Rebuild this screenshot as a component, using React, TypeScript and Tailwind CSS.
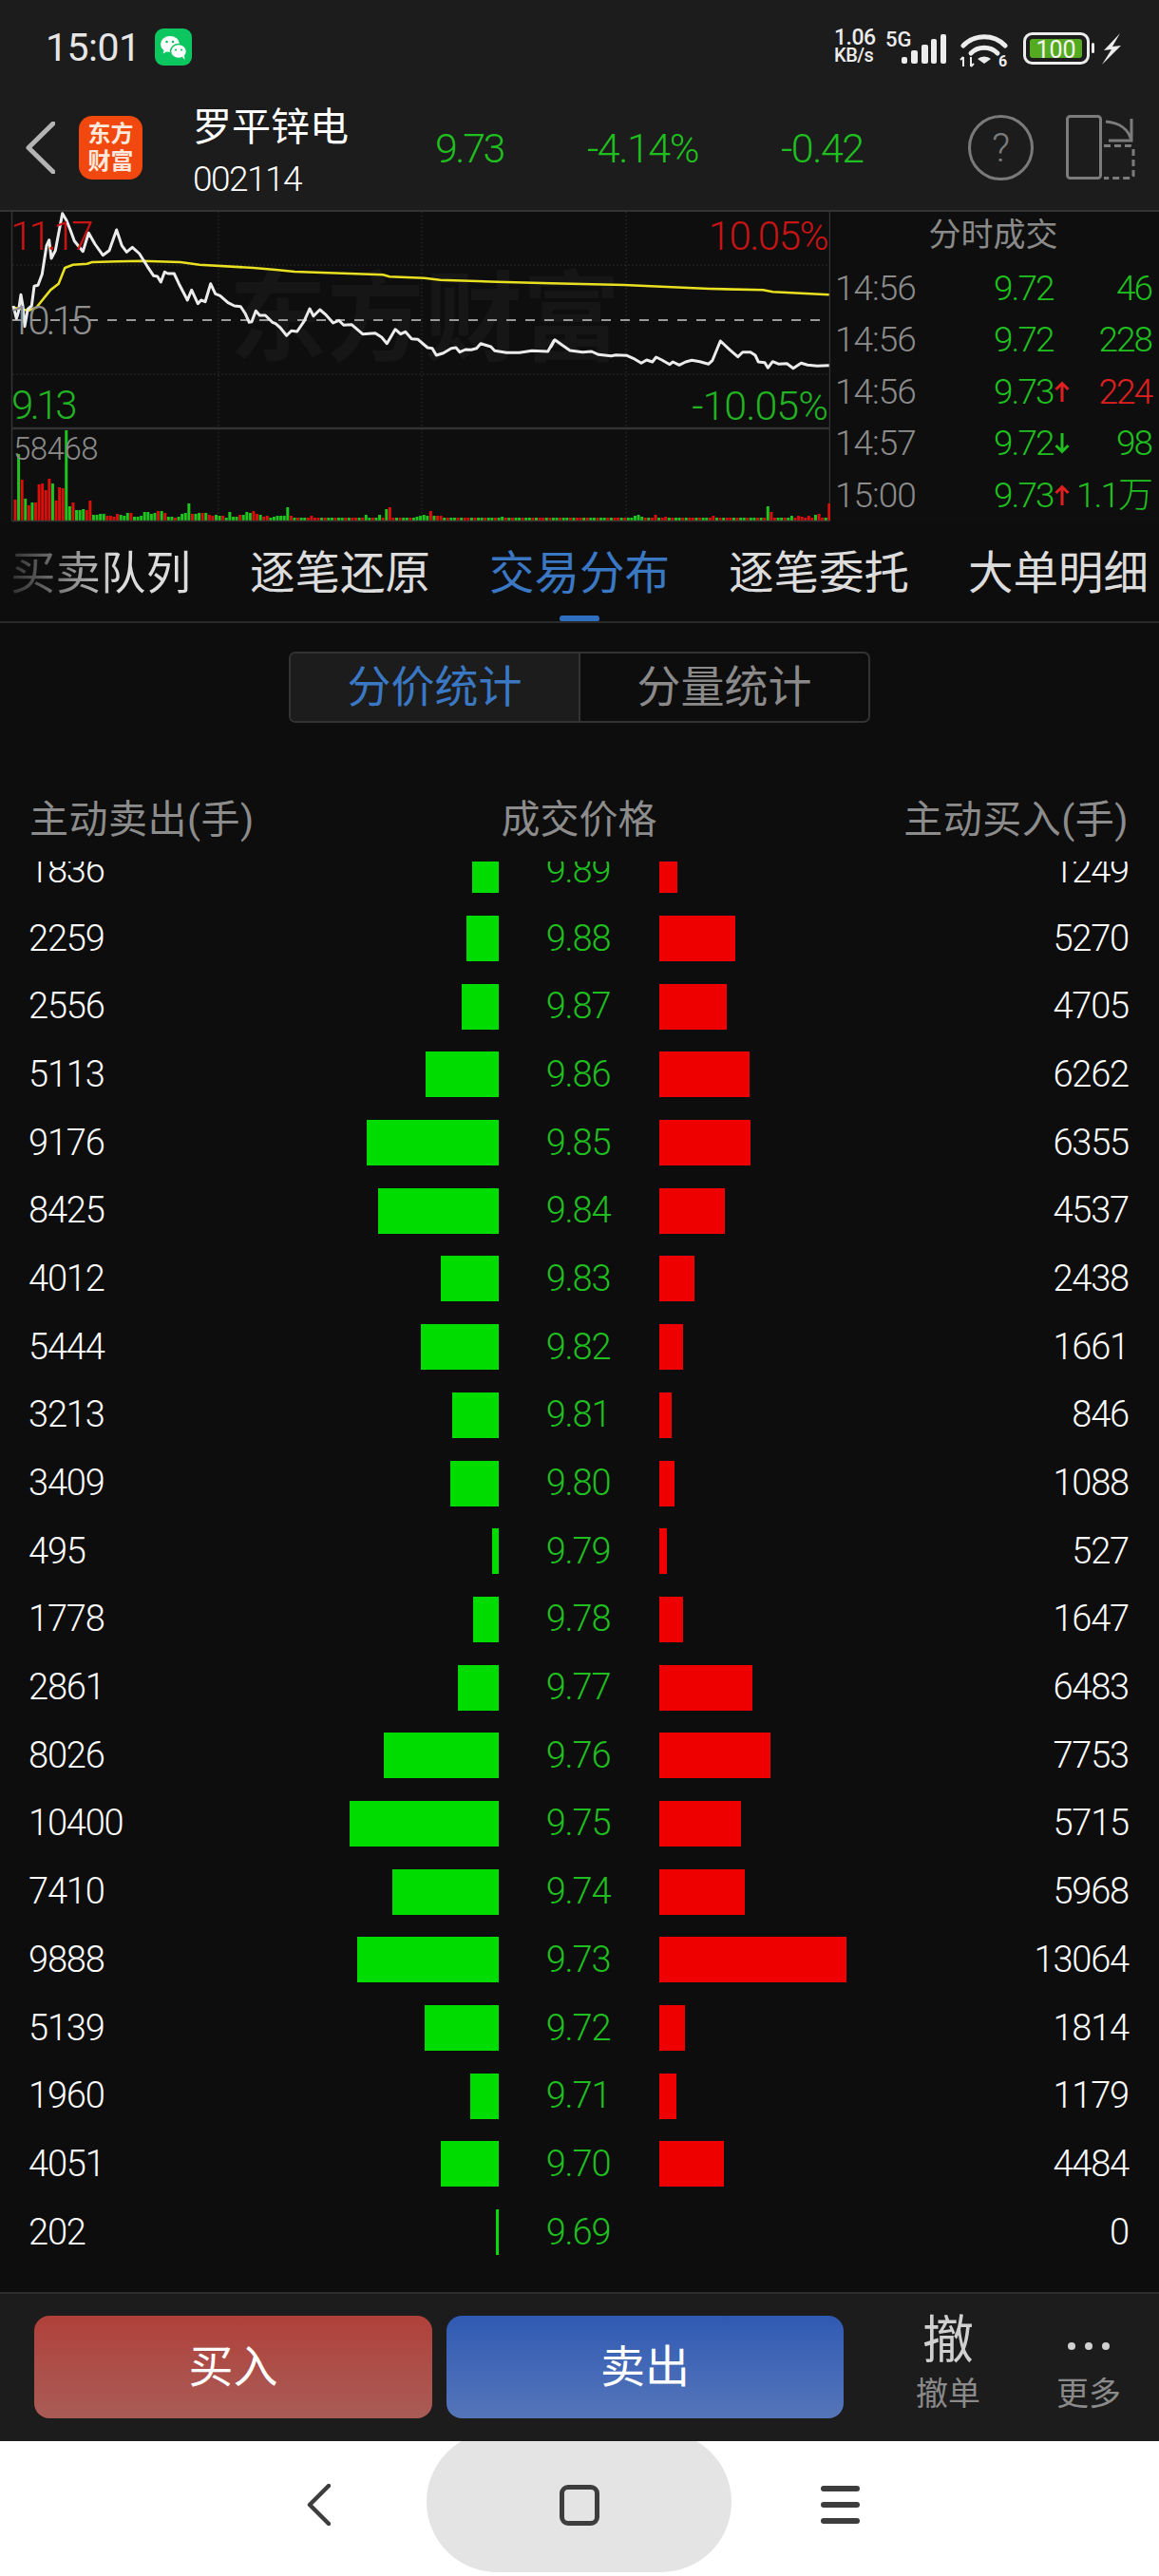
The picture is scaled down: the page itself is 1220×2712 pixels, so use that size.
import { ReactNode } from 'react'

// ─── Chart data (page coordinates) ──────────────────────────────────
const fromZoom = (pts: number[][], ox: number, oy: number) => pts.map(([x, y]) => [ox + x / 3, oy + y / 3])

const priceLine = [
  ...fromZoom(
    [[42, 300], [52, 340], [58, 320], [66, 265], [72, 300], [78, 365], [88, 310], [100, 300], [108, 238], [120, 235], [133, 200], [147, 110], [155, 92], [162, 150], [175, 125], [197, 8], [210, 30], [222, 60], [235, 95], [262, 128], [280, 70], [300, 105], [325, 140], [345, 125], [368, 60], [385, 110], [400, 130], [418, 115], [440, 135], [465, 175], [485, 205], [497, 207], [508, 225], [520, 193], [530, 198], [550, 198], [565, 230], [592, 282], [605, 250], [625, 293], [635, 282], [648, 287], [665, 230], [680, 262], [695, 268], [720, 290], [740, 300], [760, 302], [775, 325], [787, 352], [795, 350], [808, 316], [820, 330], [838, 330], [860, 352]],
    0, 222,
  ),
  ...fromZoom(
    [[0, 182], [15, 195], [35, 220], [50, 205], [68, 207], [90, 175], [108, 135], [120, 158], [140, 138], [160, 155], [182, 180], [200, 172], [215, 187], [240, 185], [275, 215], [315, 212], [335, 225], [352, 245], [378, 200], [395, 215], [410, 208], [430, 230], [450, 232], [480, 258], [495, 260], [508, 282], [530, 275], [555, 260], [570, 258], [582, 272], [600, 264], [618, 265], [635, 260], [648, 245], [680, 255], [692, 268], [730, 274], [770, 274], [810, 268], [860, 270], [880, 235]],
    290, 280,
  ),
  ...fromZoom(
    [[0, 255], [12, 233], [35, 250], [60, 267], [100, 272], [128, 270], [150, 280], [190, 284], [205, 281], [240, 283], [260, 292], [285, 307], [302, 297], [320, 303], [332, 288], [350, 297], [375, 311], [385, 303], [405, 313], [425, 303], [445, 298], [470, 302], [497, 310], [510, 298], [535, 237], [565, 265], [590, 287], [605, 272], [630, 272], [645, 282], [655, 303], [675, 305], [685, 322], [700, 302], [720, 310], [745, 308], [765, 323], [790, 307], [810, 313], [840, 316], [878, 314]],
    580, 280,
  ),
]

const avgLine = [
  ...fromZoom(
    [[42, 305], [90, 315], [115, 305], [160, 250], [185, 230], [205, 180], [230, 170], [275, 167], [290, 162], [370, 160], [450, 158], [570, 162], [630, 170], [800, 180]],
    0, 222,
  ),
  ...fromZoom([[0, 12], [60, 18], [340, 28], [360, 34], [470, 38], [520, 44], [700, 50]], 290, 280),
  ...fromZoom([[0, 55], [230, 60], [500, 72], [670, 76], [700, 82], [878, 91]], 580, 280),
]

const toPoints = (pts: number[][]) => pts.map(([x, y]) => `${x.toFixed(1)},${y.toFixed(1)}`).join(' ')

// first 80 volume bars, read one by one: height + r/g
const firstBars = '22r 70g 43r 23g 16r 19g 19r 38r 39r 32r 44r 39g 21r 35r 34r 95g 15g 19r 11g 11g 12g 11r 21r 6g 6g 7g 7g 5r 5r 4r 7r 6g 5g 8g 8r 4g 4g 5g 9g 9g 7g 8g 10r 10g 8r 4g 4g 3r 4g 7g 8g 18g 7r 7g 8g 8r 8g 6r 5r 6g 5g 5r 3g 9g 4g 4g 6r 6g 9g 8g 10r 7r 6g 4r 5r 3g 4g 5g 5g 5g'
  .split(' ')
  .map((b) => ({ h: parseInt(b), red: b.endsWith('r') }))

const spikes: [number, number, boolean][] = [
  [3, 14, false], [13, 7, true], [22, 5, true], [71, 5, true], [226, 6, false], [265, 6, false], [284, 6, false], [293, 12, false], [303, 14, true],
  [380, 4, false], [390, 5, false], [399, 6, false], [409, 5, false], [419, 10, true], [428, 5, false], [438, 5, true], [447, 5, true], [621, 4, false],
  [998, 5, false], [1008, 6, false], [1017, 4, false], [1056, 6, true], [1085, 4, true], [1220, 5, true], [1375, 15, false], [1385, 9, true],
  [1442, 5, false], [1462, 5, true], [1471, 4, true], [1490, 5, true], [1510, 6, false], [1520, 7, true], [1547, 18, true],
]
const spikeAt = new Map(spikes.map(([x, h, red]) => [Math.round((300 + x / 2.703 - 16) / 3.585), { h, red }]))

const volumeBars = Array.from({ length: 240 }, (_, i) => {
  if (i < 80) return firstBars[i]
  return spikeAt.get(i) ?? { h: 3, red: (i * 37) % 11 < 5 }
})

const trades = [
  { time: '14:56', price: '9.72', arrow: '', vol: '46', volRed: false },
  { time: '14:56', price: '9.72', arrow: '', vol: '228', volRed: false },
  { time: '14:56', price: '9.73', arrow: 'up', vol: '224', volRed: true },
  { time: '14:57', price: '9.72', arrow: 'down', vol: '98', volRed: false },
  { time: '15:00', price: '9.73', arrow: 'up', vol: '1.1万', volRed: false },
]

const rows = [
  [1836, '9.89', 1249], [2259, '9.88', 5270], [2556, '9.87', 4705], [5113, '9.86', 6262], [9176, '9.85', 6355],
  [8425, '9.84', 4537], [4012, '9.83', 2438], [5444, '9.82', 1661], [3213, '9.81', 846], [3409, '9.80', 1088],
  [495, '9.79', 527], [1778, '9.78', 1647], [2861, '9.77', 6483], [8026, '9.76', 7753], [10400, '9.75', 5715],
  [7410, '9.74', 5968], [9888, '9.73', 13064], [5139, '9.72', 1814], [1960, '9.71', 1179], [4051, '9.70', 4484],
  [202, '9.69', 0],
] as [number, string, number][]

const BAR_SCALE = 0.0151

// ─── Status bar ─────────────────────────────────────────────────────
function WechatIcon() {
  return (
    <div className="w-[39px] h-[39px] rounded-[9px] bg-[#0cc75f] flex items-center justify-center">
      <svg viewBox="0 0 39 39" className="w-[39px] h-[39px]">
        <ellipse cx="16" cy="16.5" rx="10" ry="8.5" fill="#fff" />
        <path d="M10 22l-1.5 4.5 5.5-3z" fill="#fff" />
        <ellipse cx="25" cy="24" rx="8.5" ry="7.5" fill="#fff" stroke="#0cc75f" strokeWidth="1.5" />
        <path d="M29 30l2.5 3-0.5-5z" fill="#fff" />
        <circle cx="12.5" cy="14" r="1.3" fill="#0cc75f" />
        <circle cx="19" cy="14" r="1.3" fill="#0cc75f" />
        <circle cx="22" cy="22.5" r="1.1" fill="#0cc75f" />
        <circle cx="28" cy="22.5" r="1.1" fill="#0cc75f" />
      </svg>
    </div>
  )
}

function StatusBar() {
  return (
    <div className="h-[100px] flex items-start pt-[30px] pl-[48px] pr-[38px]">
      <span className="text-[41px] leading-[41px] font-normal text-[#e6e6e6] tracking-[-0.5px] w-[115px]">15:01</span>
      <WechatIcon />
      <div className="ml-auto flex text-[#ececec]">
        <div className="w-[54px] font-medium leading-[18px] pt-[1px] flex flex-col items-start">
          <span className="text-[23px] tracking-[-0.5px]">1.06</span>
          <span className="text-[20px] tracking-[-0.5px]">KB/s</span>
        </div>
        <svg viewBox="932 30 250 42" className="w-[250px] h-[42px]" fill="#ececec">
          <text x="932" y="49" fontSize="22" fontWeight="500" fontFamily="Roboto">5G</text>
          <rect x="949" y="60" width="6" height="7" rx="2" />
          <rect x="959" y="53" width="7" height="14" rx="2" />
          <rect x="970" y="47" width="7" height="20" rx="2" />
          <rect x="980" y="41" width="6" height="26" rx="2" />
          <rect x="990" y="36" width="6" height="31" rx="2" />
          <path d="M1014 48a31 31 0 0 1 44 0" fill="none" stroke="#ececec" strokeWidth="5" strokeLinecap="round" />
          <path d="M1022 56a20 20 0 0 1 28 0" fill="none" stroke="#ececec" strokeWidth="5" strokeLinecap="round" />
          <path d="M1029 62a9 7 0 0 1 14 0l-7 5z" />
          <path d="M1014 60v10M1011 63l3-3M1022 60v10M1025 67l-3 3" stroke="#ececec" strokeWidth="2" fill="none" />
          <text x="1051" y="70" fontSize="16" fontWeight="700" fontFamily="Roboto">6</text>
          <rect x="1078.5" y="35.5" width="67" height="31" rx="8" fill="none" stroke="#ececec" strokeWidth="3" />
          <rect x="1084" y="41" width="55" height="20" rx="3" fill="#55ab1f" />
          <text x="1111.5" y="60.5" fontSize="25" textAnchor="middle" fontFamily="Roboto" fill="#f4f4f4">100</text>
          <rect x="1149" y="45" width="3" height="11" rx="1.5" />
          <path d="M1179 35l-17 18 8-1-10 16 20-20-9 1 8-14z" />
        </svg>
      </div>
    </div>
  )
}

// ─── Stock header ───────────────────────────────────────────────────
function StockHeader() {
  return (
    <div className="h-[122px] flex items-start">
      <svg viewBox="0 0 31 55" className="w-[31px] h-[55px] ml-[27px] mt-[28px]">
        <path d="M29 2 3 27.5 29 53" fill="none" stroke="#b4b4b4" strokeWidth="5" strokeLinecap="round" strokeLinejoin="round" />
      </svg>
      <div className="w-[67px] h-[67px] ml-[25px] mt-[22px] rounded-[14px] bg-[#f0480e] flex flex-col items-center justify-center font-bold text-[24px] leading-[29px] text-[#ffe9dd]">
        <span>东方</span>
        <span>财富</span>
      </div>
      <div className="ml-[53px] w-[255px] flex flex-col mt-[10px]">
        <span className="text-[41px] leading-[48px] text-white">罗平锌电</span>
        <span className="text-[37px] leading-[42px] font-light text-white tracking-[-1.5px] mt-[10px]">002114</span>
      </div>
      <span className="w-[160px] mt-[31px] text-[43px] leading-[50px] font-light text-[#1fbf1f] tracking-[-2.5px]">9.73</span>
      <span className="w-[204px] mt-[31px] text-[43px] leading-[50px] font-light text-[#1fbf1f] tracking-[-1.5px]">-4.14%</span>
      <span className="w-[197px] mt-[31px] text-[43px] leading-[50px] font-light text-[#1fbf1f] tracking-[-1.5px]">-0.42</span>
      <div className="w-[69px] h-[69px] mt-[21px] rounded-full border-[3px] border-[#7a7a7a] flex items-center justify-center text-[#7a7a7a] text-[42px] font-light">?</div>
      <svg viewBox="1120 118 80 74" className="w-[80px] h-[74px] ml-[32px] mt-[18px]" fill="none" stroke="#7c7c7c" strokeWidth="3">
        <rect x="1123.5" y="122.5" width="35" height="65" rx="3" />
        <path d="M1164 128c14 1 24 8 27 20M1191 125v23h-24" />
        <path d="M1162 153.5h28a3 3 0 0 1 3 3v28a3 3 0 0 1-3 3h-28" strokeDasharray="7 4" />
      </svg>
    </div>
  )
}

// ─── Intraday chart ─────────────────────────────────────────────────
function Chart() {
  return (
    <div className="relative w-[874px] h-[327px] shrink-0 overflow-hidden">
      <svg viewBox="0 223 874 327" className="w-[874px] h-[327px] block">
        <text x="241" y="372" fontSize="103" fontWeight="700" fill="#161616" fontFamily="Noto Sans CJK SC">东方财富</text>
        <path d="M230 223V549M444 223V549M659 223V549M13 279H873M13 394H873" stroke="#333" strokeWidth="1" strokeDasharray="1.5 2.5" />
        <path d="M12.5 223V549M873.5 223V549" stroke="#333" strokeWidth="1.5" />
        <path d="M13 451H873" stroke="#333" strokeWidth="2.5" />
        <path d="M13 337H873" stroke="#9a9a9a" strokeWidth="2" strokeDasharray="10 10" />
        {volumeBars.map((b, i) => (
          <rect key={i} x={14.5 + i * 3.585} y={548 - b.h} width="3" height={b.h} fill={b.red ? '#d8100c' : '#1fc41f'} />
        ))}
        <path d="M13 548.5H873" stroke="#333" strokeWidth="1.5" />
        <polyline points={toPoints(avgLine)} fill="none" stroke="#e8e020" strokeWidth="2.6" />
        <polyline points={toPoints(priceLine)} fill="none" stroke="#ececec" strokeWidth="3" strokeLinejoin="round" />
      </svg>
      <span className="absolute left-[11px] top-[2px] text-[42px] leading-[48px] font-light text-[#c81414] tracking-[-4px]">11.17</span>
      <span className="absolute right-[3px] top-[2px] text-[42px] leading-[48px] font-light text-[#c81414] tracking-[-1.5px]">10.05%</span>
      <span className="absolute left-[10px] top-[91px] text-[42px] leading-[48px] font-light text-[#8f8f8f] tracking-[-4px]">10.15</span>
      <span className="absolute left-[12px] top-[180px] text-[42px] leading-[48px] font-light text-[#22b322] tracking-[-3.5px]">9.13</span>
      <span className="absolute right-[3px] top-[180px] text-[43px] leading-[48px] font-light text-[#22b322] tracking-[-1px]">-10.05%</span>
      <span className="absolute left-[14px] top-[232px] text-[33px] leading-[36px] font-light text-[#8c8c8c] tracking-[-0.5px]">58468</span>
    </div>
  )
}

function Arrow({ dir }: { dir: string }) {
  const color = dir === 'up' ? '#e02020' : '#1fbf1f'
  return (
    <svg viewBox="0 0 16 22" className="w-[16px] h-[22px]" fill="none" stroke={color} strokeWidth="3">
      {dir === 'up' ? <path d="M8 22V3M1.5 9 8 2.5 14.5 9" /> : <path d="M8 0v19M1.5 13 8 19.5 14.5 13" />}
    </svg>
  )
}

function TradePanel() {
  return (
    <div className="flex-1 flex flex-col">
      <div className="h-[53px] flex items-center justify-center text-[34px] text-[#8a8a8a] pr-[3px] pb-[4px]">分时成交</div>
      {trades.map((t, i) => (
        <div key={i} className="h-[54.5px] flex items-center text-[37px] font-light pl-[5px] pr-[8px]">
          <span className="w-[167px] text-[#8c8c8c] tracking-[-1px]">{t.time}</span>
          <span className="w-[64px] text-[#1fbf1f] tracking-[-2px]">{t.price}</span>
          <span className="w-[16px] flex">{t.arrow && <Arrow dir={t.arrow} />}</span>
          <span className={`flex-1 text-right tracking-[-2px] whitespace-nowrap ${t.volRed ? 'text-[#e02020]' : 'text-[#1fbf1f]'}`}>{t.vol}</span>
        </div>
      ))}
    </div>
  )
}

// ─── Tabs ───────────────────────────────────────────────────────────
function Tabs() {
  return (
    <div className="relative h-[106px] shrink-0 border-b-2 border-[#2a2a2a] flex items-start pt-[28px] pl-[11px] gap-[62px] text-[47.5px] leading-[52px] text-[#dcdcdc] whitespace-nowrap">
      <span className="bg-linear-to-r from-[#303030] to-[#dcdcdc] to-60% bg-clip-text text-transparent">买卖队列</span>
      <span>逐笔还原</span>
      <span className="text-[#3a78c4]">交易分布</span>
      <span>逐笔委托</span>
      <span>大单明细</span>
      <div className="absolute left-[589px] bottom-0 w-[42px] h-[6px] rounded-t-[3px] rounded-b-[2px] bg-[#2e6fbf]" />
    </div>
  )
}

function Segment() {
  return (
    <div className="flex justify-center mt-[30px] shrink-0">
      <div className="w-[612px] h-[75px] flex rounded-[7px] border-2 border-[#333] text-[46px] overflow-hidden">
        <div className="w-[305px] bg-[#1c1c1c] border-r-2 border-[#333] flex items-center justify-center text-[#3a78c4]">分价统计</div>
        <div className="flex-1 flex items-center justify-center text-[#8a8a8a]">分量统计</div>
      </div>
    </div>
  )
}

function ColumnHeader() {
  return (
    <div className="h-[50px] mt-[78px] shrink-0 flex items-center justify-between pl-[31px] pr-[32px] text-[41px] text-[#8c8c8c] whitespace-nowrap">
      <span className="w-[300px] tracking-[0.5px]">主动卖出(手)</span>
      <span>成交价格</span>
      <span className="w-[300px] text-right tracking-[0.5px]">主动买入(手)</span>
    </div>
  )
}

function Num({ children, className }: { children: ReactNode; className?: string }) {
  return <span className={`font-light text-[38px] tracking-[-1.2px] ${className ?? ''}`}>{children}</span>
}

function Rows() {
  return (
    <div className="h-[1506px] shrink-0 mt-[18px] overflow-hidden">
      <div className="-mt-[26.5px] flex flex-col">
        {rows.map(([sell, price, buy]) => (
          <div key={price} className="h-[71.7px] shrink-0 flex items-center">
            <div className="w-[525px] h-full flex items-center pl-[30px]">
              <Num className="text-white">{sell}</Num>
              <div className="ml-auto h-[48px] bg-[#00dc00]" style={{ width: Math.max(3, sell * BAR_SCALE) }} />
            </div>
            <div className="w-[169px] text-center pr-[2px]">
              <Num className="text-[#1fbf1f]">{price}</Num>
            </div>
            <div className="flex-1 h-full flex items-center pr-[32px]">
              {buy > 0 && <div className="h-[48px] bg-[#ee0000]" style={{ width: buy * BAR_SCALE }} />}
              <Num className="ml-auto text-white">{buy}</Num>
            </div>
          </div>
        ))}
      </div>
    </div>
  )
}

// ─── Bottom actions and system nav ──────────────────────────────────
function ActionBar() {
  return (
    <div className="h-[157px] shrink-0 bg-[#1c1c1c] border-t-2 border-[#2e2e2e] flex items-start pt-[23px] pl-[36px]">
      <button className="w-[419px] h-[108px] rounded-[16px] bg-linear-to-b from-[#b0403a] to-[#a95b56] text-white text-[47px]">买入</button>
      <button className="w-[418px] h-[108px] ml-[15px] rounded-[16px] bg-linear-to-b from-[#2f5ab3] to-[#5675b9] text-white text-[47px]">卖出</button>
      <div className="w-[68px] ml-[76px] -mt-[6px] flex flex-col items-center">
        <span className="text-[54px] leading-[66px] text-[#d0d0d0]">撤</span>
        <span className="text-[34px] leading-[44px] text-[#8a8a8a] whitespace-nowrap">撤单</span>
      </div>
      <div className="w-[68px] ml-[80px] -mt-[6px] flex flex-col items-center">
        <div className="h-[66px] flex items-center gap-[10px] pt-[10px]">
          <i className="w-[8px] h-[8px] rounded-full bg-[#d0d0d0]" />
          <i className="w-[8px] h-[8px] rounded-full bg-[#d0d0d0]" />
          <i className="w-[8px] h-[8px] rounded-full bg-[#d0d0d0]" />
        </div>
        <span className="text-[34px] leading-[44px] text-[#8a8a8a] whitespace-nowrap">更多</span>
      </div>
    </div>
  )
}

function NavBar() {
  return (
    <div className="h-[142px] shrink-0 bg-white overflow-hidden flex items-center pl-[323px]">
      <svg viewBox="0 0 25 44" className="w-[25px] h-[44px] -mt-[9px]">
        <path d="M23 2 3 22l20 20" fill="none" stroke="#3d3d3d" strokeWidth="4.5" strokeLinecap="round" strokeLinejoin="round" />
      </svg>
      <div className="w-[321px] h-[148px] ml-[101px] -mt-[14px] rounded-full bg-[#e4e4e4] flex items-center justify-center pt-[6px] shrink-0">
        <div className="w-[42px] h-[43px] rounded-[9px] border-[5px] border-[#3d3d3d]" />
      </div>
      <div className="w-[41px] ml-[94px] -mt-[8px] flex flex-col gap-[11px]">
        <div className="h-[6px] rounded-full bg-[#3d3d3d]" />
        <div className="h-[6px] rounded-full bg-[#3d3d3d]" />
        <div className="h-[6px] rounded-full bg-[#3d3d3d]" />
      </div>
    </div>
  )
}

export default function App() {
  return (
    <div className="w-[1220px] h-[2712px] flex flex-col bg-[#0d0d0d] font-[Roboto,'Noto_Sans_CJK_SC',sans-serif] overflow-hidden">
      <div className="h-[222px] shrink-0 bg-[#1c1c1c] border-b border-[#333]">
        <StatusBar />
        <StockHeader />
      </div>
      <div className="h-[328px] shrink-0 flex bg-[#0e0e0e] border-t border-[#333]">
        <Chart />
        <TradePanel />
      </div>
      <Tabs />
      <Segment />
      <ColumnHeader />
      <Rows />
      <ActionBar />
      <NavBar />
    </div>
  )
}
